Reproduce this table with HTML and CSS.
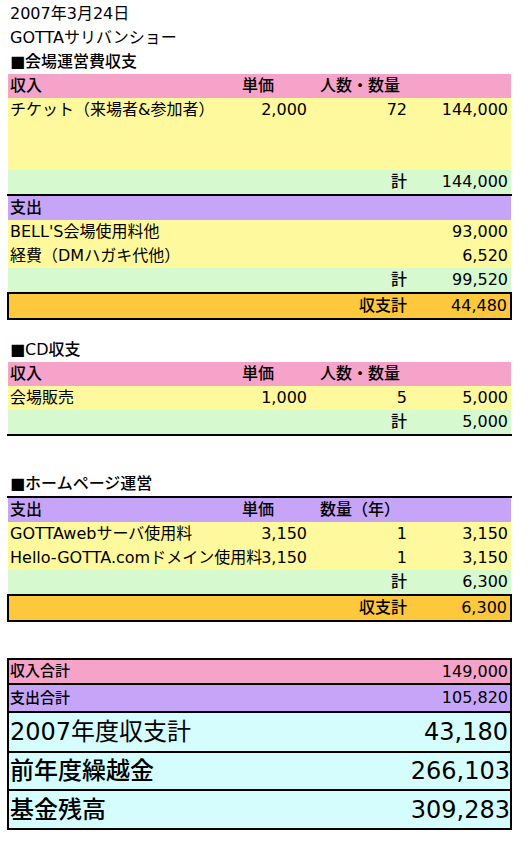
FILE: index.html
```html
<!DOCTYPE html>
<html lang="ja">
<head>
  <meta charset="UTF-8">
  <meta name="viewport" content="width=device-width, initial-scale=1.0">
  <title>GOTTAサリバンショー 収支報告</title>
  <link rel="stylesheet" href="styles.css">
</head>
<body>
  <div class="sheet">
    <div class="line">2007年3月24日</div>
    <div class="line">GOTTAサリバンショー</div>
    <div class="line title">■会場運営費収支</div>

    <!-- 会場運営費 -->
    <div class="row pink head"><span>収入</span><span>単価</span><span>人数・数量</span><span></span></div>
    <div class="row yellow"><span>チケット（来場者&amp;参加者）</span><span class="num b">2,000</span><span class="num">72</span><span class="num">144,000</span></div>
    <div class="row yellow"></div>
    <div class="row yellow"></div>
    <div class="row green"><span></span><span></span><span class="num label">計</span><span class="num">144,000</span></div>
    <div class="rule"></div>
    <div class="row purple head"><span>支出</span><span></span><span></span><span></span></div>
    <div class="row yellow"><span>BELL'S会場使用料他</span><span></span><span></span><span class="num">93,000</span></div>
    <div class="row yellow"><span>経費（DMハガキ代他）</span><span></span><span></span><span class="num">6,520</span></div>
    <div class="row green"><span></span><span></span><span class="num label">計</span><span class="num">99,520</span></div>
    <div class="box">
      <div class="row orange"><span></span><span></span><span class="num label">収支計</span><span class="num">44,480</span></div>
    </div>

    <!-- CD -->
    <div class="line title gap-s">■CD収支</div>
    <div class="row pink head"><span>収入</span><span>単価</span><span>人数・数量</span><span></span></div>
    <div class="row yellow"><span>会場販売</span><span class="num b">1,000</span><span class="num">5</span><span class="num">5,000</span></div>
    <div class="row green"><span></span><span></span><span class="num label">計</span><span class="num">5,000</span></div>
    <div class="rule"></div>

    <!-- ホームページ -->
    <div class="line title gap-l">■ホームページ運営</div>
    <div class="rule"></div>
    <div class="row purple head"><span>支出</span><span>単価</span><span>数量（年）</span><span></span></div>
    <div class="row yellow"><span>GOTTAwebサーバ使用料</span><span class="num b">3,150</span><span class="num">1</span><span class="num">3,150</span></div>
    <div class="row yellow"><span>Hello-GOTTA.comドメイン使用料</span><span class="num b">3,150</span><span class="num">1</span><span class="num">3,150</span></div>
    <div class="row green"><span></span><span></span><span class="num label">計</span><span class="num">6,300</span></div>
    <div class="box">
      <div class="row orange"><span></span><span></span><span class="num label">収支計</span><span class="num">6,300</span></div>
    </div>

    <!-- 合計 -->
    <div class="summary">
      <div class="srow pink small"><span class="label">収入合計</span><span>149,000</span></div>
      <div class="srow purple small"><span class="label">支出合計</span><span>105,820</span></div>
      <div class="srow cyan big first"><span>2007年度収支計</span><span>43,180</span></div>
      <div class="srow cyan big"><span class="label">前年度繰越金</span><span class="tight">266,103</span></div>
      <div class="srow cyan big last"><span class="label">基金残高</span><span class="tight">309,283</span></div>
    </div>
  </div>
</body>
</html>
```

FILE: styles.css
```css
body {
  margin: 0;
  padding: 2px 0 0 8px;
  font-family: "DejaVu Sans", "Noto Sans CJK JP", sans-serif;
  font-size: 16px;
  color: #000;
  background: #fff;
}
.sheet {
  width: 503px;
}
.line {
  height: 24px;
  line-height: 24px;
  padding-left: 2px;
  white-space: nowrap;
}
.title {
  font-weight: 500;
}
.gap-s {
  margin-top: 18px;
}
.gap-l {
  margin-top: 36px;
}
.row {
  display: grid;
  grid-template-columns: 232px 78px 92px 101px;
  height: 24px;
  align-items: center;
  white-space: nowrap;
  line-height: 1;
}
.row span {
  padding: 0 2px;
}
.row .num {
  text-align: right;
  padding-right: 3px;
}
.row .num.b {
  padding-right: 11px;
}
.head,
.label {
  font-weight: 500;
}
.pink { background: #f5a3c8; }
.yellow { background: #fff99e; }
.green { background: #d6f9cf; }
.purple { background: #c6a5f9; }
.orange { background: #fdc83b; }
.cyan { background: #d5fdfd; }
.rule {
  height: 2px;
  margin: 0 -1px;
  background: #000;
}
.box {
  margin: 0 -1px;
  border: 2px solid #000;
}
.box .row {
  grid-template-columns: 231px 78px 92px 100px;
}
.summary {
  margin: 36px -1px 0;
  border: 2px solid #000;
  overflow: hidden;
}
.srow {
  display: flex;
  justify-content: space-between;
  align-items: center;
  padding: 0 2px 0 1px;
  white-space: nowrap;
  line-height: 1;
}
.srow + .srow {
  border-top: 2px solid #000;
}
.small {
  height: 23px;
}
.small .label {
  font-size: 15px;
}
.purple.small {
  height: 26px;
}
.big {
  font-size: 24px;
  height: 38px;
}
.big + .big {
  height: 36px;
}
.big.last {
  height: 37px;
}
.big .tight {
  margin-right: -2px;
}
```
